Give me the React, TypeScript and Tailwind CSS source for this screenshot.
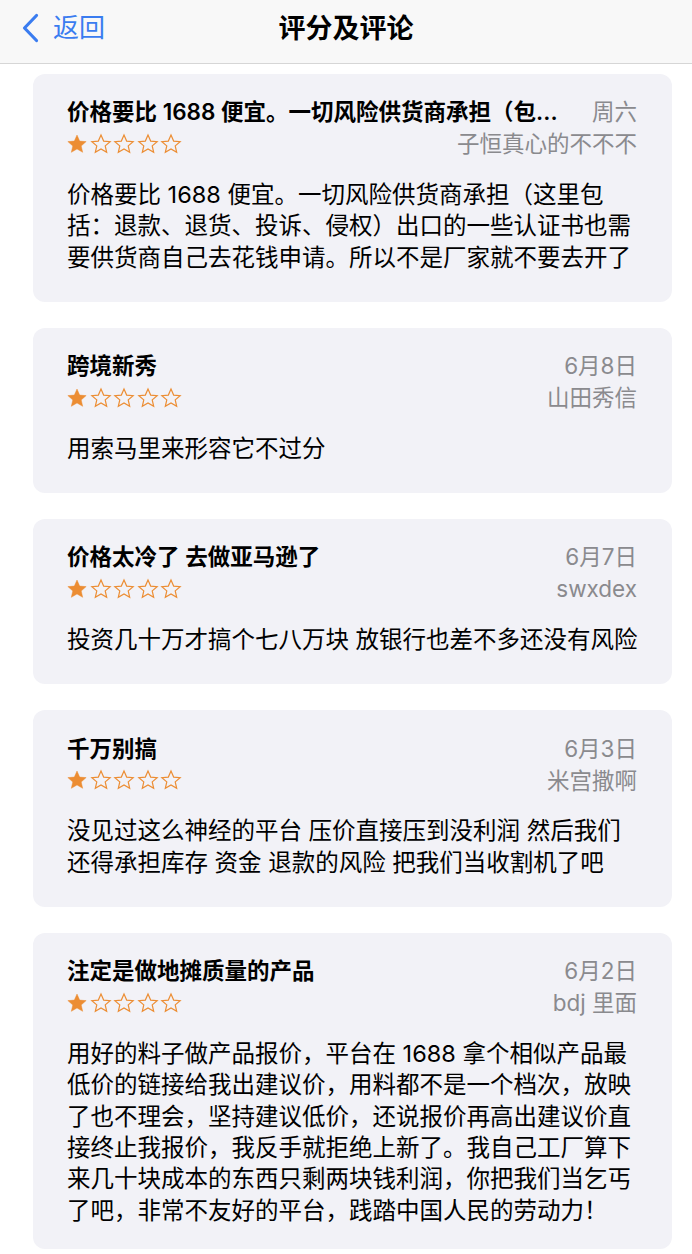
import React from "react";

const FONT = '"Inter", "Noto Sans CJK SC", sans-serif';

type Review = { title: string; date: string; author: string; lines: string[] };

const reviews: Review[] = [
  {
    title: "价格要比 1688 便宜。一切风险供货商承担（包...",
    date: "周六",
    author: "子恒真心的不不不",
    lines: [
      "价格要比 1688 便宜。一切风险供货商承担（这里包",
      "括：退款、退货、投诉、侵权）出口的一些认证书也需",
      "要供货商自己去花钱申请。所以不是厂家就不要去开了",
    ],
  },
  { title: "跨境新秀", date: "6月8日", author: "山田秀信", lines: ["用索马里来形容它不过分"] },
  {
    title: "价格太冷了 去做亚马逊了",
    date: "6月7日",
    author: "swxdex",
    lines: ["投资几十万才搞个七八万块 放银行也差不多还没有风险"],
  },
  {
    title: "千万别搞",
    date: "6月3日",
    author: "米宫撒啊",
    lines: [
      "没见过这么神经的平台 压价直接压到没利润 然后我们",
      "还得承担库存 资金 退款的风险 把我们当收割机了吧",
    ],
  },
  {
    title: "注定是做地摊质量的产品",
    date: "6月2日",
    author: "bdj 里面",
    lines: [
      "用好的料子做产品报价，平台在 1688 拿个相似产品最",
      "低价的链接给我出建议价，用料都不是一个档次，放映",
      "了也不理会，坚持建议低价，还说报价再高出建议价直",
      "接终止我报价，我反手就拒绝上新了。我自己工厂算下",
      "来几十块成本的东西只剩两块钱利润，你把我们当乞丐",
      "了吧，非常不友好的平台，践踏中国人民的劳动力！",
    ],
  },
];

const STAR = "M12 2.2l2.9 6.6 7.1.6-5.4 4.7 1.6 7-6.2-3.7-6.2 3.7 1.6-7L2 9.4l7.1-.6z";

function Stars() {
  return (
    <div className="flex items-center gap-[1.5px] -ml-[1px]">
      {[0, 1, 2, 3, 4].map((i) => (
        <svg key={i} viewBox="0 0 24 24" className="w-[22px] h-[22px]">
          <path
            d={STAR}
            fill={i === 0 ? "#ec8d33" : "none"}
            stroke="#ec8d33"
            strokeWidth={i === 0 ? 0.5 : 1.3}
          />
        </svg>
      ))}
    </div>
  );
}

function Card({ r, last }: { r: Review; last?: boolean }) {
  return (
    <div
      className={
        "bg-[#f2f2f7] rounded-[12px] pl-[34px] pr-[30px] pt-[22px] " + (last ? "pb-[23px]" : "pb-[29px]")
      }
    >
      <div className="flex items-center justify-between h-[32px] gap-3 pr-[5px]">
        <div className="flex-1 min-w-0 whitespace-nowrap overflow-hidden text-[22.5px] font-semibold text-black">
          {r.title}
        </div>
        <div className="shrink-0 text-[22.5px] text-[#8a8a8e]">{r.date}</div>
      </div>
      <div className="flex items-center justify-between h-[32px] pr-[5px]">
        <Stars />
        <div className="text-[22.5px] text-[#8a8a8e]">{r.author}</div>
      </div>
      <div className="mt-[19px] text-[23.5px] text-black">
        {r.lines.map((l, i) => (
          <div key={i} className="h-[31.3px] leading-[31.3px] whitespace-nowrap">
            {l}
          </div>
        ))}
      </div>
    </div>
  );
}

export default function App() {
  return (
    <div className="w-[692px] h-[1254px] bg-white overflow-hidden" style={{ fontFamily: FONT }}>
      <div className="h-[64px] bg-[#f8f8f8] border-b border-[#d6d6d6] relative flex items-center">
        <div className="flex items-center pl-[21px] pb-[8px]">
          <svg viewBox="0 0 18 30" className="w-[18px] h-[30px]">
            <path
              d="M15.5 2.5 L3.5 15 L15.5 27.5"
              fill="none"
              stroke="#3a7cf0"
              strokeWidth="3.2"
              strokeLinecap="round"
              strokeLinejoin="round"
            />
          </svg>
          <span className="ml-[14px] text-[26px] text-[#3a7cf0] leading-none">返回</span>
        </div>
        <div className="absolute left-0 right-0 top-0 h-[59px] flex items-center justify-center text-[27px] font-semibold text-black">
          评分及评论
        </div>
      </div>
      <div className="pl-[33px] pr-[20px] pt-[10px] flex flex-col gap-[26px]">
        {reviews.map((r, i) => (
          <Card key={i} r={r} last={i === reviews.length - 1} />
        ))}
      </div>
    </div>
  );
}
